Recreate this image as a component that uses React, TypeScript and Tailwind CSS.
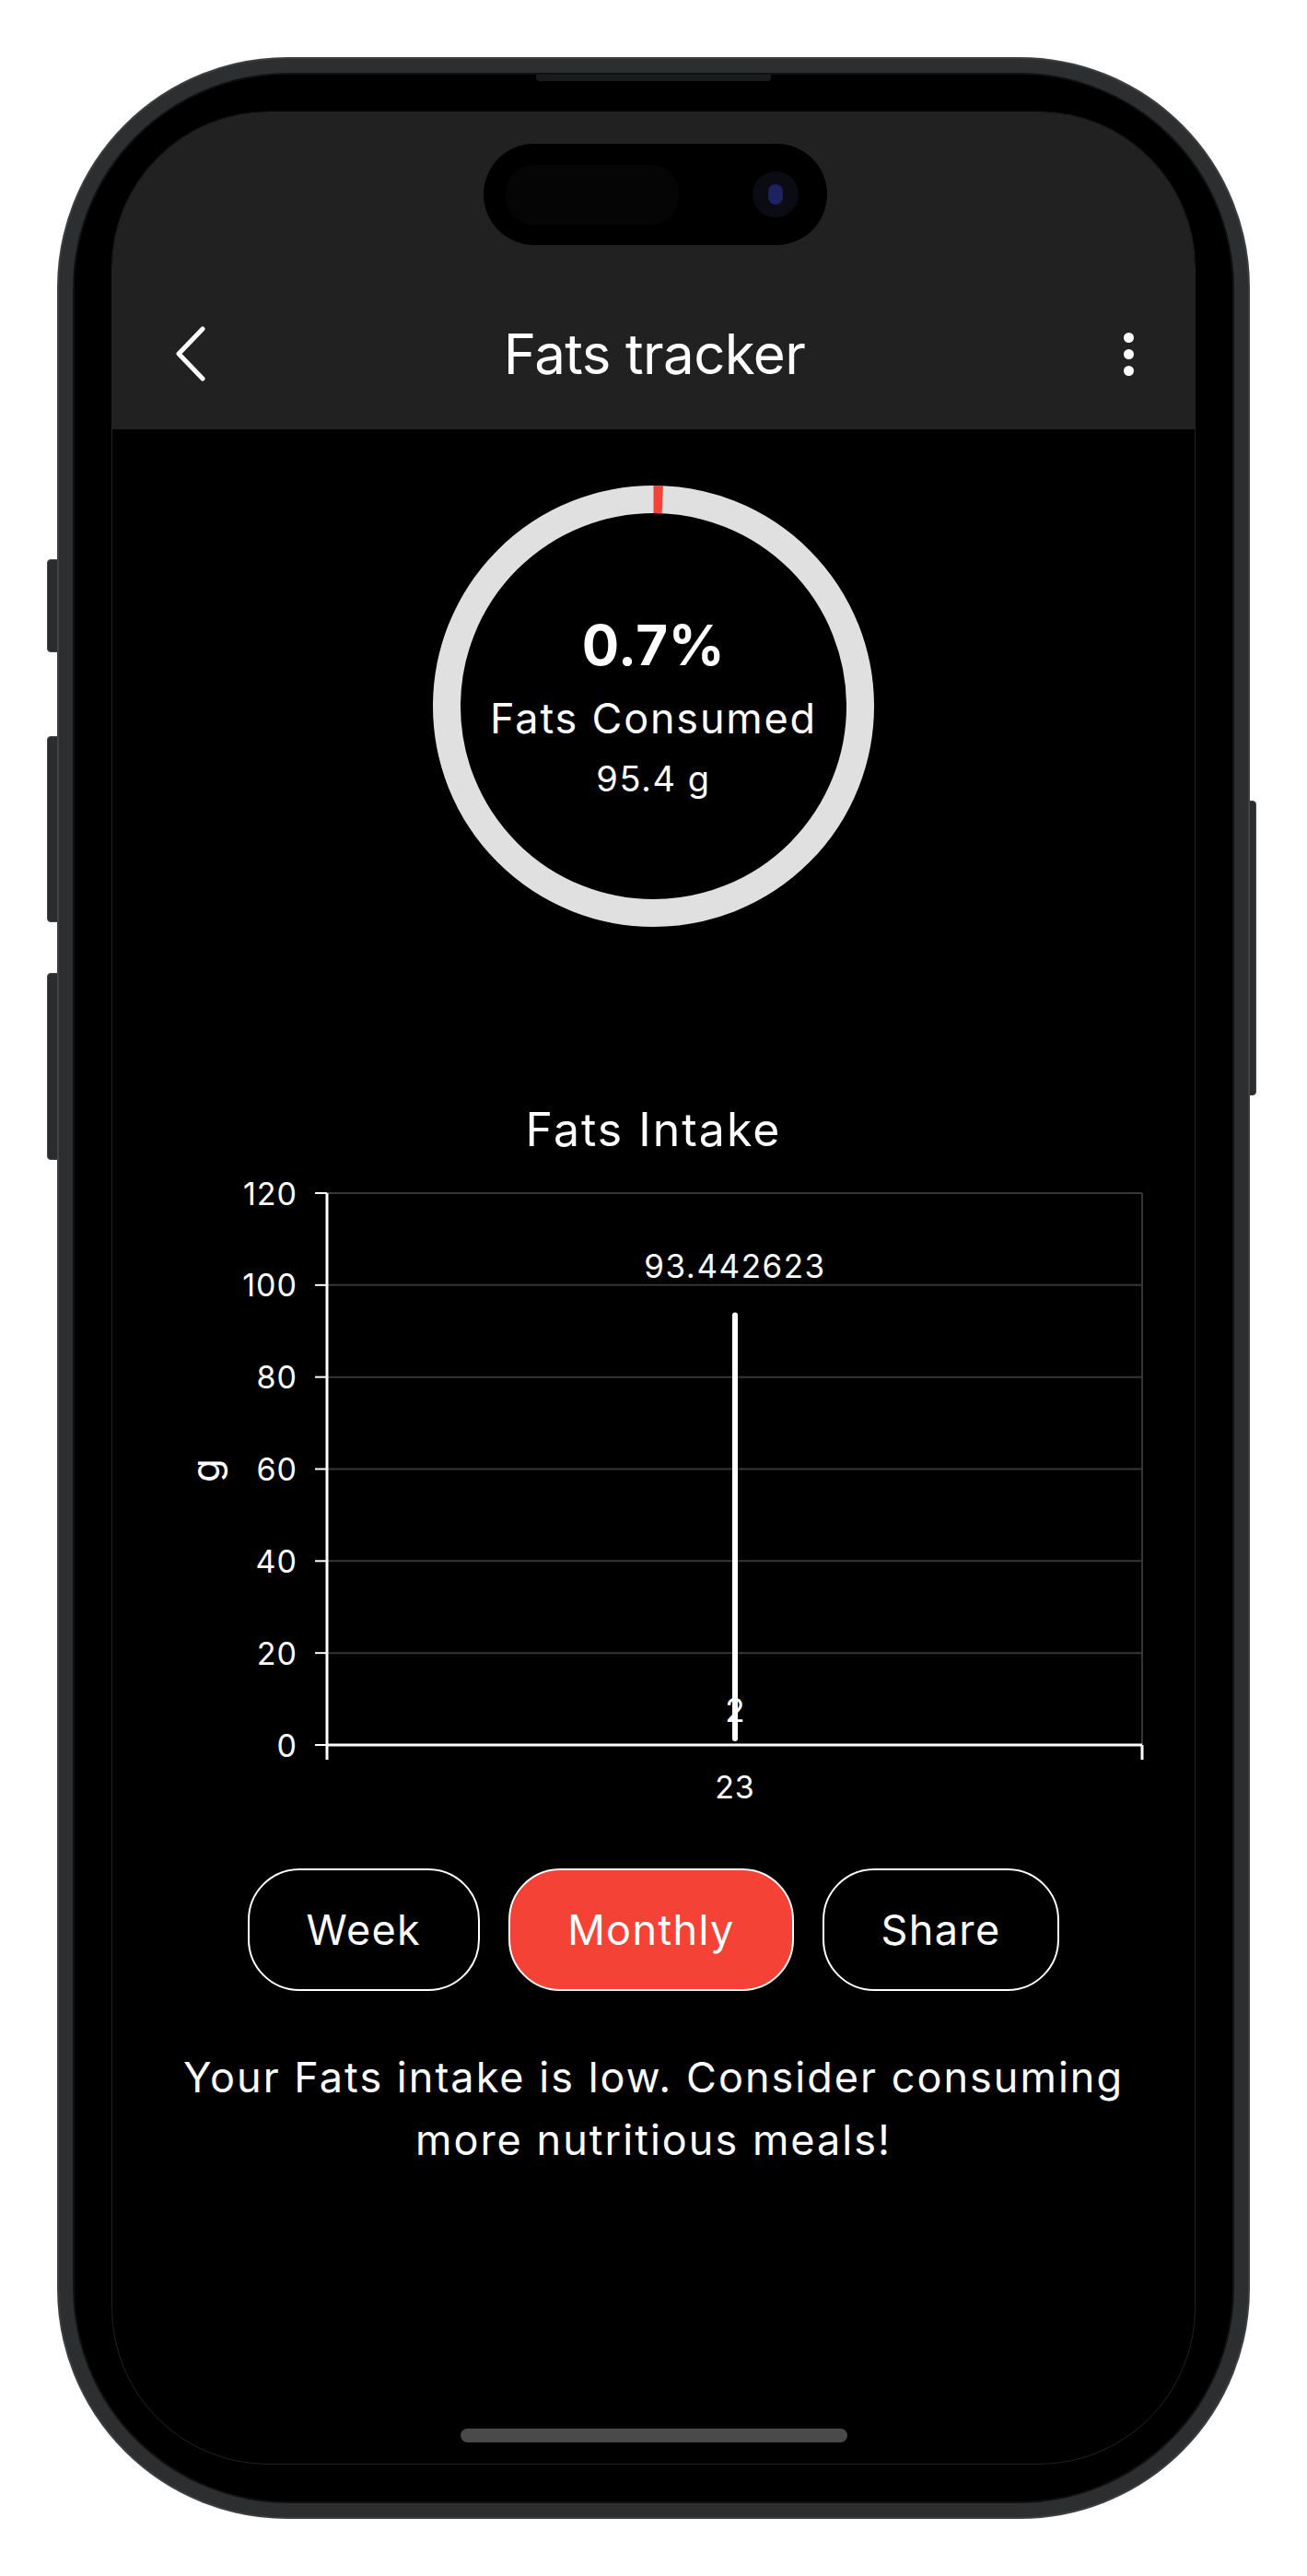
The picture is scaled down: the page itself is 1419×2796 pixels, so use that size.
import React from "react";

const TICKS = [120, 100, 80, 60, 40, 20, 0];

function BackIcon() {
  return (
    <svg width="34" height="60" viewBox="0 0 34 60" fill="none">
      <path d="M30 3 L4 30 L30 57" stroke="#fff" strokeWidth="5" strokeLinecap="round" strokeLinejoin="round" />
    </svg>
  );
}

function MoreIcon() {
  return (
    <div className="flex flex-col items-center gap-[7px]">
      <span className="block h-[11px] w-[11px] rounded-full bg-white" />
      <span className="block h-[11px] w-[11px] rounded-full bg-white" />
      <span className="block h-[11px] w-[11px] rounded-full bg-white" />
    </div>
  );
}

function ProgressRing({ percent }: { percent: number }) {
  const r = 224.5;
  const c = 2 * Math.PI * r;
  const arc = Math.max((percent / 100) * c, 1);
  return (
    <div className="relative h-[479px] w-[479px]">
      <svg width="479" height="479" viewBox="0 0 479 479" className="absolute inset-0">
        <circle cx="239.5" cy="239.5" r={r} fill="none" stroke="#e0e0e0" strokeWidth="30" />
        <circle
          cx="239.5"
          cy="239.5"
          r={r}
          fill="none"
          stroke="#f44336"
          strokeWidth="30"
          strokeDasharray={`${arc} ${c}`}
          transform="rotate(-90 239.5 239.5)"
        />
      </svg>
      <div className="absolute inset-0 flex flex-col items-center justify-center text-white">
        <p className="text-[60px] leading-none font-bold tracking-[0.01em]">0.7%</p>
        <p className="mt-[27px] text-[45px] leading-none tracking-[0.04em]">Fats Consumed</p>
        <p className="mt-[24px] text-[38px] leading-none tracking-[0.04em]">95.4 g</p>
      </div>
    </div>
  );
}

function IntakeChart() {
  const left = 233;
  const right = 1118;
  const top = 23;
  const bottom = 622;
  const y = (v: number) => bottom - (v / 120) * (bottom - top);
  const barX = 676;
  const value = 93.442623;

  return (
    <svg width="1179" height="700" viewBox="0 0 1179 700" className="block" fontFamily="Inter, 'Noto Sans', sans-serif">
      {TICKS.map((t) => (
        <g key={t}>
          {t !== 0 && <line x1={left} x2={right} y1={y(t)} y2={y(t)} stroke="#363636" strokeWidth="2" />}
          <line x1={220} x2={left} y1={y(t)} y2={y(t)} stroke="#fff" strokeWidth="2" />
          <text x={201} y={y(t)} textAnchor="end" dominantBaseline="central" fill="#fff" fontSize="34" letterSpacing="1">
            {t}
          </text>
        </g>
      ))}
      <line x1={right} x2={right} y1={top} y2={bottom} stroke="#363636" strokeWidth="2" />
      <line x1={left} x2={left} y1={top} y2={bottom + 16} stroke="#fff" strokeWidth="3" />
      <line x1={left} x2={right} y1={bottom} y2={bottom} stroke="#fff" strokeWidth="3" />
      <line x1={right} x2={right} y1={bottom} y2={bottom + 16} stroke="#fff" strokeWidth="3" />

      <text
        x={100}
        y={324}
        transform="rotate(-90 100 324)"
        textAnchor="middle"
        dominantBaseline="central"
        fill="#fff"
        fontSize="42"
      >
        g
      </text>

      <line x1={barX} x2={barX} y1={y(value)} y2={bottom - 7} stroke="#fff" strokeWidth="6" strokeLinecap="round" />
      <text x={barX} y={115} textAnchor="middle" fill="#fff" fontSize="35" letterSpacing="1.5">
        93.442623
      </text>
      <text x={barX} y={597} textAnchor="middle" fill="#fff" fontSize="35">
        2
      </text>
      <text x={barX} y={680} textAnchor="middle" fill="#fff" fontSize="34" letterSpacing="1">
        23
      </text>
    </svg>
  );
}

function PillButton({ label, active }: { label: string; active?: boolean }) {
  return (
    <button
      className={
        active
          ? "flex h-[133px] items-center justify-center rounded-[56px] border-2 border-white bg-[#f44336] px-[62px] text-[45px] tracking-[0.03em] text-white"
          : "flex h-[133px] items-center justify-center rounded-[56px] border-2 border-white bg-black px-[62px] text-[45px] tracking-[0.03em] text-white"
      }
    >
      {label}
    </button>
  );
}

export default function App() {
  return (
    <div className="flex h-[2796px] w-[1419px] justify-center bg-white pt-[62px] font-['Inter','Noto_Sans',sans-serif]">
      <div className="relative h-[2672px] w-[1295px] rounded-[250px] border-2 border-[#3d3f42] bg-[#2c2e30] p-[15px]">
        {/* side buttons */}
        <div className="absolute left-[-13px] top-[543px] h-[101px] w-[12px] rounded-l-[4px] border border-[#46484b] bg-[#2a2c2e]" />
        <div className="absolute left-[-13px] top-[735px] h-[202px] w-[12px] rounded-l-[4px] border border-[#46484b] bg-[#2a2c2e]" />
        <div className="absolute left-[-13px] top-[992px] h-[203px] w-[12px] rounded-l-[4px] border border-[#46484b] bg-[#2a2c2e]" />
        <div className="absolute right-[-9px] top-[805px] h-[320px] w-[8px] rounded-r-[4px] border border-[#46484b] bg-[#2a2c2e]" />
        <div className="absolute left-[518px] top-[17px] h-[7px] w-[255px] rounded-b-[4px] bg-[#1a1b1d]" />

        <div className="h-full w-full rounded-[234px] border-2 border-[#111] bg-black p-[40px]">
          <div className="relative flex h-full w-full flex-col items-center overflow-hidden rounded-[170px] border border-[#222] bg-black text-white">
            {/* header */}
            <div className="relative flex h-[344px] w-full shrink-0 flex-col justify-end bg-[#212121]">
              <div className="absolute left-[403px] top-[34px] flex h-[110px] w-[373px] items-center rounded-full bg-black">
                <div className="ml-[24px] h-[65px] w-[188px] rounded-[30px] bg-[#050505]" />
                <div className="ml-[80px] flex h-[50px] w-[50px] items-center justify-center rounded-full bg-[#0b0b14]">
                  <div className="h-[22px] w-[16px] rounded-full bg-[#1c2360]" />
                </div>
              </div>
              <div className="flex h-[164px] items-center pl-[68px] pr-[66px]">
                <div className="flex w-[60px] justify-start">
                  <BackIcon />
                </div>
                <h1 className="flex-1 text-center text-[60px] leading-none tracking-[-0.01em]">Fats tracker</h1>
                <div className="flex w-[60px] justify-end">
                  <MoreIcon />
                </div>
              </div>
            </div>

            {/* content */}
            <div className="mt-[61px]">
              <ProgressRing percent={0.7} />
            </div>

            <h2 className="mt-[195px] text-[50px] leading-none tracking-[0.04em]">Fats Intake</h2>

            <div className="mt-[21px] w-full">
              <IntakeChart />
            </div>

            <div className="mt-[56px] flex gap-[31px]">
              <PillButton label="Week" />
              <PillButton label="Monthly" active />
              <PillButton label="Share" />
            </div>

            <p className="mt-[60px] w-[1080px] text-center text-[45px] leading-[68px] tracking-[0.045em]">
              Your Fats intake is low. Consider consuming more nutritious meals!
            </p>

            <div className="mt-auto mb-[23px] h-[15px] w-[420px] rounded-full bg-[#4a4a4a]" />
          </div>
        </div>
      </div>
    </div>
  );
}
